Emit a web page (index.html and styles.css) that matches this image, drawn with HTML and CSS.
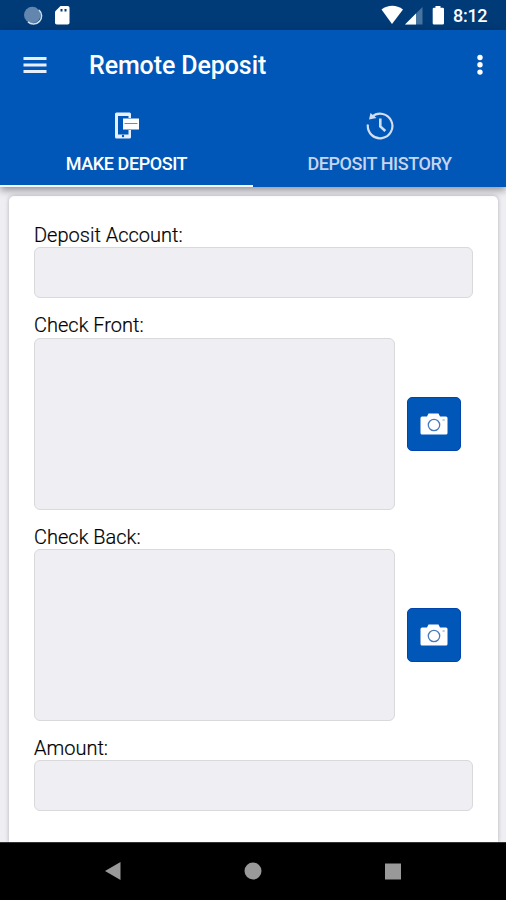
FILE: index.html
```html
<!DOCTYPE html>
<html lang="en">
<head>
<meta charset="utf-8">
<title>Remote Deposit</title>
<link rel="stylesheet" href="styles.css">
</head>
<body>
<div class="screen">
  <div class="status">
    <svg class="status-icons" width="80" height="30" viewBox="0 0 80 30">
      <circle cx="32.300" cy="15" r="8.300" fill="#6386af"/>
      <path d="M39 10a8 8 0 0 1-11 11.800" fill="none" stroke="#d3deeb" stroke-width="1.600"/>
      <path d="M60.500 6h7.200q1.800 0 1.800 1.800v14.900q0 1.800-1.800 1.800H56.800q-1.800 0-1.800-1.800V11.500z" fill="#fff"/>
      <path d="M60.500 9h2v2.500h-2zM64.500 9h2v2.500h-2z" fill="#003b77"/>
    </svg>
    <svg class="status-icons" width="67" height="30" viewBox="380 0 67 30">
      <path d="M381.500 9.500C388 4.500 396.500 4.500 403 9.500L392 24z" fill="#fff"/>
      <path d="M405 24.500L422.500 7v17.500z" fill="#47759f"/>
      <path d="M405 24.500L416 13.500v11z" fill="#fff"/>
      <path d="M435.500 6h5v1.800h2.200q1.300 0 1.300 1.300v14.100q0 1.300-1.300 1.300h-8.700q-1.300 0-1.300-1.300V9.100q0-1.300 1.300-1.300h1.500z" fill="#fff"/>
    </svg>
    <span class="clock">8:12</span>
  </div>
  <header class="appbar">
    <div class="toolbar">
      <svg class="menu" width="24" height="18" viewBox="0 0 24 18"><path d="M.5 2.500h23M.5 9h23M.5 15.500h23" stroke="#e9eefb" stroke-width="3"/></svg>
      <h1 class="title">Remote Deposit</h1>
      <svg class="more" width="6" height="22" viewBox="0 0 6 22" fill="#fff"><circle cx="3" cy="3.500" r="2.700"/><circle cx="3" cy="10.800" r="2.700"/><circle cx="3" cy="18.100" r="2.700"/></svg>
    </div>
    <nav class="tabs">
      <div class="tab active">
        <svg width="28" height="30" viewBox="0 0 28 30">
          <path d="M3.500 1.500h13q1.500 0 1.500 1.500v4h-2.500V5H5v19h10.500v-5H18v7q0 1.500-1.500 1.500h-13Q2 27.500 2 26V3q0-1.500 1.500-1.500z" fill="#e7eeff"/>
          <path d="M4 23.500h13v3H4z" fill="#e7eeff"/>
          <path d="M10 7.500h16v11H10z" fill="#fff"/>
          <path d="M11.500 12.500h13" stroke="#5c8fd0" stroke-width="1"/>
          <circle cx="10" cy="25" r="1.200" fill="#0057b8"/>
        </svg>
        <span class="tab-label">MAKE DEPOSIT</span>
      </div>
      <div class="tab">
        <svg width="30" height="30" viewBox="0 0 30 30">
          <path d="M2.900 13.500A12.300 12.300 0 1 0 7 5.800" fill="none" stroke="#d2def1" stroke-width="2.200"/>
          <path d="M5.500 2L11.500 7 4 8.500z" fill="#d2def1"/>
          <path d="M15.300 7.500v8l5 4.500" fill="none" stroke="#d2def1" stroke-width="2.600"/>
        </svg>
        <span class="tab-label">DEPOSIT HISTORY</span>
      </div>
    </nav>
  </header>
  <main class="content">
    <form class="card">
      <div class="field"><span class="label">Deposit Account:</span><div class="box"></div></div>
      <div class="field"><span class="label">Check Front:</span>
        <div class="photo-row"><div class="box photo"></div>
          <div class="camera"><svg width="28" height="24" viewBox="0 0 28 24"><path d="M7 4.500L8.500 1.500h10L20 4.500h6q1.500 0 1.500 1.500v15q0 1.500-1.500 1.500H2Q.5 22.500.5 21V6Q.5 4.500 2 4.500z" fill="#fff"/><circle cx="14" cy="13" r="5.700" fill="none" stroke="#477abf" stroke-width="1.300"/><path d="M22.500 8h2.200" stroke="#8aabd8" stroke-width="1.200"/></svg></div>
        </div></div>
      <div class="field"><span class="label">Check Back:</span>
        <div class="photo-row"><div class="box photo"></div>
          <div class="camera"><svg width="28" height="24" viewBox="0 0 28 24"><path d="M7 4.500L8.500 1.500h10L20 4.500h6q1.500 0 1.500 1.500v15q0 1.500-1.500 1.500H2Q.5 22.500.5 21V6Q.5 4.500 2 4.500z" fill="#fff"/><circle cx="14" cy="13" r="5.700" fill="none" stroke="#477abf" stroke-width="1.300"/><path d="M22.500 8h2.200" stroke="#8aabd8" stroke-width="1.200"/></svg></div>
        </div></div>
      <div class="field"><span class="label">Amount:</span><div class="box"></div></div>
    </form>
  </main>
  <footer class="navbar">
    <svg width="18" height="20" viewBox="0 0 18 20"><path d="M1 10L16.500 1v18z" fill="#999"/></svg>
    <svg width="18" height="20" viewBox="0 0 18 20"><circle cx="9" cy="10" r="8.500" fill="#999"/></svg>
    <svg width="18" height="20" viewBox="0 0 18 20"><path d="M1 2.500h16v16H1z" fill="#999"/></svg>
  </footer>
</div>
</body>
</html>
```

FILE: styles.css
```css
* { box-sizing: border-box; }
body { margin: 0; font-family: Roboto, "Liberation Sans", sans-serif; }
svg { display: block; flex: none; }
.screen { width: 506px; height: 900px; display: flex; flex-direction: column; overflow: hidden; background: #eeeef3; }
.status { height: 30px; flex: none; display: flex; align-items: center; background: #003b77; }
.status-icons + .status-icons { margin-left: 300px; }
.clock { margin-left: 6px; padding-top: 2px; color: #fff; font-size: 18px; line-height: 28px; font-weight: 500; letter-spacing: -.3px; white-space: nowrap; }
.appbar { position: relative; z-index: 1; height: 157px; flex: none; background: #0057b8; box-shadow: 0 3px 8px rgba(0, 0, 0, .4); }
.toolbar { height: 71px; display: flex; align-items: center; padding: 0 23px 0 23px; }
.menu { margin-top: -2px; }
.title { margin: 0 0 0 42px; color: #fff; font-size: 25px; line-height: 32px; font-weight: 500; letter-spacing: -.1px; white-space: nowrap; }
.more { margin-left: auto; margin-top: -2px; }
.tabs { display: grid; grid-template-columns: 1fr 1fr; height: 86px; }
.tab { display: flex; flex-direction: column; align-items: center; padding-top: 10px; color: #c6d5ed; border-bottom: 2px solid transparent; }
.tab.active { color: #fff; border-color: #f4f6ff; }
.tab-label { margin-top: 11px; font-size: 18px; line-height: 24px; font-weight: 500; letter-spacing: -.42px; white-space: nowrap; }
.content { flex: 1; min-height: 0; padding: 9px 8px 0 9px; }
.card { height: 100%; padding: 26px 25px 0 25px; background: #fff; border-radius: 5px 5px 0 0; box-shadow: 0 0 4px rgba(0, 0, 0, .25); display: flex; flex-direction: column; gap: 13.900px; }
.field { display: flex; flex-direction: column; }
.label { height: 25.400px; line-height: 26px; font-size: 20px; font-weight: 300; color: #000; -webkit-text-stroke: .2px #000; white-space: nowrap; }
.box { height: 51px; background: #eeeef3; border: 1px solid #d9d9dc; border-radius: 6px; }
.photo-row { display: flex; align-items: center; gap: 12px; }
.photo { width: 361px; height: 172px; }
.camera { width: 54px; height: 54px; display: flex; align-items: center; justify-content: center; background: #0057b8; border: 1px solid #0044ae; border-radius: 5px; }
.navbar { height: 58px; flex: none; display: flex; align-items: center; justify-content: center; gap: 122px; padding-bottom: 2px; background: #000; border-top: 1px solid #333; }
```
